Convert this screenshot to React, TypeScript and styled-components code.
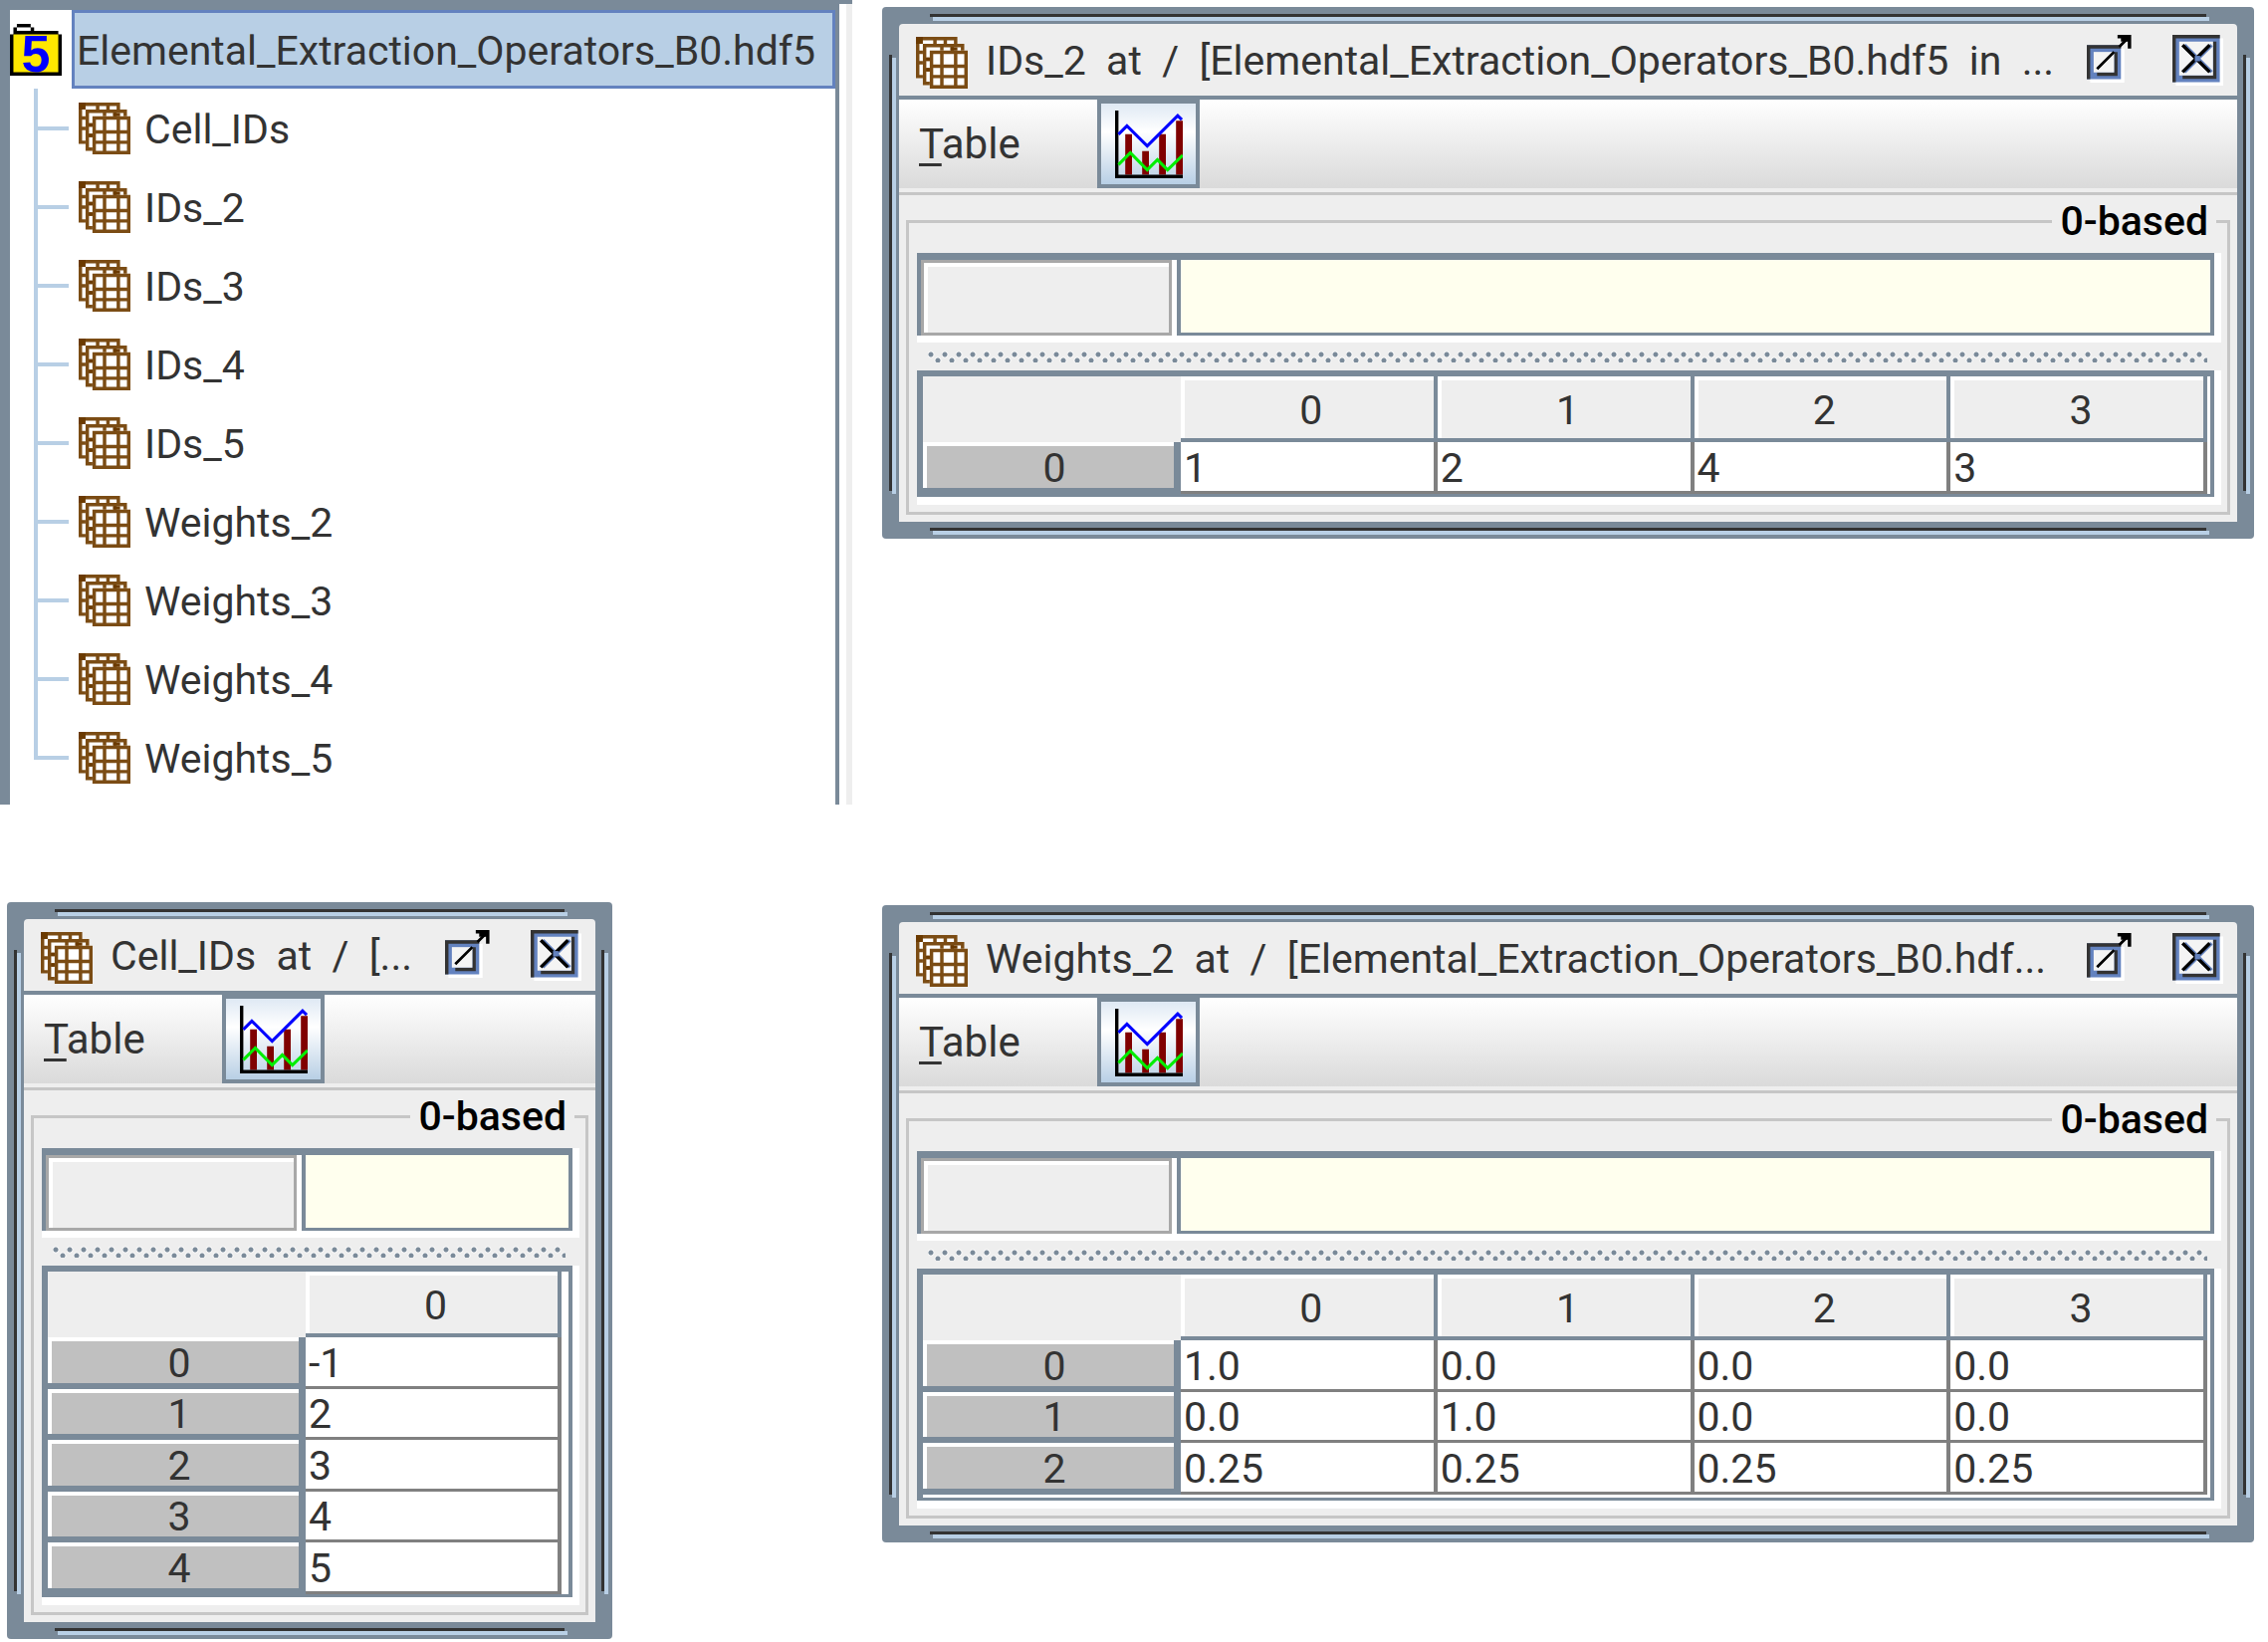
import React from 'react';
import styled, { createGlobalStyle, css } from 'styled-components';

const c = {
  frame: '#7a8a99',
  dark: '#333333',
  light: '#b8cfe5',
  blue: '#6382bf',
  panel: '#eeeeee',
  etch: '#c6c6c6',
  grid: '#808080',
  brown: '#7b4c14',
};

const GlobalStyle = createGlobalStyle`
  *, *::before, *::after { box-sizing: border-box; }
  body { margin: 0; background: #fff; }
  body, button, input {
    font-family: Roboto, "Liberation Sans", sans-serif;
    font-size: 41px;
    line-height: 50px;
    color: ${c.dark};
  }
`;

const Desktop = styled.main`
  display: grid;
  grid-template-columns: 856px minmax(0, 1fr);
  column-gap: 30px;
  row-gap: 98px;
  align-items: start;
  padding-right: 14px;
`;

const Cell = styled.div<{ $top?: number; $left?: number }>`
  padding-top: ${p => p.$top ?? 0}px;
  padding-left: ${p => p.$left ?? 0}px;
`;

/* ---------- tree ---------- */

const TreePanel = styled.nav`
  display: flex;
`;

const TreeArea = styled.div`
  flex: 1;
  min-width: 0;
  border: solid ${c.frame};
  border-width: 10px 4px 0 10px;
  padding-bottom: 8px;
`;

const Gutter = styled.div`
  width: 13px;
  border-top: 4px solid ${c.frame};
  background: linear-gradient(90deg, #fff 7px, ${c.panel} 7px);
`;

const RootRow = styled.div`
  display: flex;
  align-items: center;
  gap: 10px;
  height: 79px;
`;

const RootLabel = styled.span`
  flex: 1;
  height: 100%;
  display: flex;
  align-items: center;
  padding: 2px 0 0 2px;
  border: 3px solid ${c.blue};
  background: ${c.light};
  white-space: nowrap;
`;

const Branches = styled.ul`
  list-style: none;
  margin: 0;
  padding: 0;
`;

const line = (color: string) => `linear-gradient(${color}, ${color})`;

const Branch = styled.li`
  display: flex;
  align-items: center;
  gap: 14px;
  height: 79px;
  padding-left: 69px;
  background:
    ${line(c.light)} 24px 0 / 4px 100% no-repeat,
    ${line(c.light)} 24px 38px / 35px 4px no-repeat;

  &:last-child {
    background-size: 4px 42px, 35px 4px;
  }
`;

const BranchLabel = styled.span`
  padding-top: 2px;
`;

/* ---------- internal frame ---------- */

const Frame = styled.section<{ $width?: string }>`
  width: ${p => p.$width ?? '100%'};
  padding: 17px;
  border-radius: 4px;
  background:
    ${line(c.dark)} 48px 7px / calc(100% - 96px) 3px no-repeat,
    ${line(c.light)} 51px 10px / calc(100% - 96px) 4px no-repeat,
    ${line(c.dark)} 48px calc(100% - 8px) / calc(100% - 96px) 3px no-repeat,
    ${line(c.light)} 51px calc(100% - 4px) / calc(100% - 96px) 4px no-repeat,
    ${line(c.dark)} 7px 48px / 3px calc(100% - 96px) no-repeat,
    ${line(c.light)} 10px 51px / 4px calc(100% - 96px) no-repeat,
    ${line(c.dark)} calc(100% - 8px) 48px / 3px calc(100% - 96px) no-repeat,
    ${line(c.light)} calc(100% - 4px) 51px / 4px calc(100% - 96px) no-repeat,
    ${c.frame};
`;

const FrameBody = styled.div`
  background: ${c.panel};
  border-radius: 4px 4px 0 0;
  padding-bottom: 7px;
`;

const TitleBar = styled.header`
  display: flex;
  align-items: center;
  height: 76px;
  padding: 0 14px 0 17px;
  border-bottom: 4px solid ${c.frame};
`;

const TitleText = styled.h2`
  flex: 1;
  min-width: 0;
  margin: 0 0 0 18px;
  padding-top: 2px;
  font: inherit;
  white-space: pre;
`;

const TitleIcon = styled.span`
  display: flex;
  padding-top: 6px;
`;

const TitleButtons = styled.div`
  display: flex;
  gap: 38px;
`;

const TitleButton = styled.button`
  display: flex;
  padding: 0;
  border: 0;
  background: none;
`;

const MenuBar = styled.div`
  display: flex;
  align-items: center;
  height: 96px;
  padding: 0 0 7px 20px;
  background:
    ${line(c.etch)} 0 93px / 100% 3px no-repeat,
    ${line(c.panel)} 0 89px / 100% 7px no-repeat,
    linear-gradient(#fff, #dadada 89px);
`;

const Menu = styled.button`
  width: 179px;
  padding: 0;
  border: 0;
  background: none;
  font-size: 42px;
  text-align: left;

  u {
    text-decoration-thickness: 3px;
    text-underline-offset: 5px;
    text-decoration-skip-ink: none;
  }
`;

const ToolToggle = styled.button`
  display: flex;
  align-items: center;
  justify-content: center;
  width: 103px;
  height: 89px;
  padding: 0;
  border: 4px solid ${c.frame};
  background: linear-gradient(#dfe9f4, #fff 35%, ${c.light});
`;

const Group = styled.fieldset`
  margin: 5px 7px 0;
  padding: 11px 6px 7px 8px;
  min-width: 0;
  border: 3px solid ${c.etch};
`;

const GroupTitle = styled.legend`
  margin: 0 5px 0 auto;
  padding: 0 8px;
  color: #000;
  font-weight: 500;
  line-height: 42px;
`;

const well = css`
  background: #fff;
  padding: 0 7px 7px 0;
`;

const FormulaWell = styled.div`
  ${well}
`;

const FormulaBar = styled.div`
  display: flex;
  gap: 5px;
  height: 83px;
  border-top: 7px solid ${c.frame};
  border-left: 4px solid ${c.frame};
`;

const CellName = styled.input`
  flex: none;
  width: 252px;
  padding: 0 4px;
  border: 3px solid #a8a8a8;
  border-radius: 0;
  outline: 0;
  background: ${c.panel};
  box-shadow: inset 4px 4px #fff;
`;

const CellValue = styled.input`
  flex: 1;
  min-width: 0;
  padding: 0 4px;
  border: solid ${c.frame};
  border-width: 0 4px 3px;
  border-radius: 0;
  outline: 0;
  background: #ffffee;
`;

const Divider = styled.div`
  height: 28px;
  padding: 8px 14px 8px 11px;

  &::before {
    content: '';
    display: block;
    height: 12px;
    background:
      radial-gradient(circle at 3px 4px, ${c.frame} 2px, #fafafa 3px, transparent 4px) 0 0 / 14px 12px,
      radial-gradient(circle at 10px 10px, ${c.frame} 2px, #fafafa 3px, transparent 4px) 0 0 / 14px 12px;
  }
`;

const TableWell = styled.div`
  ${well}
  padding-bottom: 8px;
`;

const TablePane = styled.div<{ $slackX: number; $slackY: number }>`
  border: solid ${c.frame};
  border-width: 6px 4px 3px 6px;
  padding: 0 ${p => p.$slackX}px ${p => p.$slackY}px 0;
`;

const Grid = styled.table`
  width: 100%;
  table-layout: fixed;
  border-collapse: separate;
  border-spacing: 0;

  th, td {
    padding: 0;
    font-weight: 400;
  }
`;

const Corner = styled.td`
  width: 259px;
  height: 66px;
  background: ${c.panel};
`;

const ColumnHead = styled.th`
  && { padding: 5px 0 0 8px; }
  border: solid ${c.frame};
  border-width: 0 4px 4px 0;
  background: ${c.panel};
  box-shadow: inset 4px 4px #fff;
`;

const Row = styled.tr`
  height: 52px;
  &:nth-child(even) { height: 51px; }
`;

const RowHead = styled.th`
  && { padding: 5px 0 0 12px; }
  border: solid ${c.frame};
  border-width: 0 7px 6px 0;
  background: #c0c0c0;
  box-shadow: inset 4px 4px #fff;
  line-height: 40px;
`;

const Data = styled.td`
  && { padding: 2px 0 0 3px; }
  border: solid ${c.grid};
  border-width: 0 4px 3px 0;
  background: #fff;
  line-height: 40px;
`;

/* ---------- drawings ---------- */

const DatasetIcon = () => (
  <svg width="52" height="52" viewBox="0 0 15 15" aria-hidden="true">
    <path fill="#fff" d="M0 0h12v2h2v2h1v11H4v-1H2v-2H0z" />
    <g fill="none" stroke={c.brown}>
      <path d="M.5 12V.5h11V2M0 11.5h2M0 4.5h2M0 7.5h2M5.5 0v2M8.5 0v2" />
      <path d="M2.5 14V2.5h11V4M2 13.5h2M2 6.5h2M2 9.5h2M7.5 2v2M10.5 2v2" />
      <path d="M4.5 4.5h10v10h-10zM7.5 4v11M11.5 4v11M4 8.5h11M4 11.5h11" />
    </g>
    <path fill="#6b3a00" d="M0 0h2v2H0zM3 6h1v1H3zM3 9h1v1H3zM10 3h2v1h-2z" />
  </svg>
);

const FolderSvg = styled.svg`
  overflow: visible;
`;

const Hdf5Icon = () => (
  <FolderSvg width="52" height="52" viewBox="0 0 15 15" aria-hidden="true">
    <path fill="#000" d="M2 0h4v1h1v1h7v1h1v12H0V3h1V1h1z" />
    <path fill="#fff" d="M2 1h4v1H2z" />
    <path fill="#ffe800" d="M1 3h13v11H1z" />
    <text x="7.5" y="13.8" textAnchor="middle" fontFamily="Liberation Sans, sans-serif" fontWeight="700" fontSize="15" fill="#0000ff">5</text>
  </FolderSvg>
);

const ChartIcon = () => (
  <svg width="68" height="68" viewBox="0 0 20 20" aria-hidden="true">
    <path fill="#800000" d="M3 7h2v12H3zM8 12h2v7H8zM13 7h2v12h-2zM18 3h2v16h-2z" />
    <path fill="#000" d="M0 0h1v19h19v1H0z" />
    <polyline fill="none" stroke="#0000ff" strokeWidth="0.9" points="1,7 3.5,4.5 9.5,10.5 18.5,1.5 19.7,2.7" />
    <polyline fill="none" stroke="#00ee00" strokeWidth="0.9" points="1,16 4.5,12.5 9.5,17.5 12.5,14.5 15.5,17.5 20,13.2" />
  </svg>
);

const DetachIcon = () => (
  <svg width="48" height="48" viewBox="0 0 14 14" aria-hidden="true">
    <path fill="#fff" d="M1 4h10v10H1z" />
    <path fill={c.blue} d="M0 3h10v10H0z" />
    <path fill={c.dark} d="M0 3h10v1H1v9H0zM8 5h1v7H3v-1h5z" />
    <path fill="#f4f4f4" d="M2 5h6v6H2z" />
    <path fill="none" stroke="#000" strokeWidth="0.8" d="M3 10 8 5M9.5 3.5 12 1" />
    <path fill="#000" d="M9 0h4v4h-1V2h-2V1H9z" />
  </svg>
);

const CloseIcon = () => (
  <svg width="51" height="51" viewBox="0 0 15 15" aria-hidden="true">
    <path fill="#fff" d="M1 1h14v14H1z" />
    <path fill={c.blue} d="M0 0h14v14H0z" />
    <path fill={c.dark} d="M0 0h14v1H1v13H0zM12 2h1v11H3v-1h9z" />
    <path fill="#f4f4f4" d="M2 2h10v10H2z" />
    <path fill="none" stroke={c.blue} d="m3.6 3 8 8M11.6 3l-8 8" />
    <path fill="none" stroke="#000" d="m3 3 8 8M11 3l-8 8" />
    <path fill={c.blue} d="M6.6 6.2h1.6v1.6H6.6z" />
  </svg>
);

/* ---------- data ---------- */

const datasets = [
  'Cell_IDs', 'IDs_2', 'IDs_3', 'IDs_4', 'IDs_5',
  'Weights_2', 'Weights_3', 'Weights_4', 'Weights_5',
];

interface DataWindowProps {
  title: string;
  rows: string[][];
  width?: string;
  slackX?: number;
  slackY?: number;
}

const DataWindow = ({ title, rows, width, slackX = 3, slackY = 0 }: DataWindowProps) => (
  <Frame $width={width}>
    <FrameBody>
      <TitleBar>
        <TitleIcon><DatasetIcon /></TitleIcon>
        <TitleText>{title}</TitleText>
        <TitleButtons>
          <TitleButton aria-label="Detach"><DetachIcon /></TitleButton>
          <TitleButton aria-label="Close"><CloseIcon /></TitleButton>
        </TitleButtons>
      </TitleBar>
      <MenuBar>
        <Menu><u>T</u>able</Menu>
        <ToolToggle aria-label="Chart"><ChartIcon /></ToolToggle>
      </MenuBar>
      <Group>
        <GroupTitle>0-based</GroupTitle>
        <FormulaWell>
          <FormulaBar>
            <CellName aria-label="Cell" readOnly />
            <CellValue aria-label="Value" readOnly />
          </FormulaBar>
        </FormulaWell>
        <Divider />
        <TableWell>
          <TablePane $slackX={slackX} $slackY={slackY}>
            <Grid>
              <thead>
                <tr>
                  <Corner />
                  {rows[0].map((_, i) => <ColumnHead key={i} scope="col">{i}</ColumnHead>)}
                </tr>
              </thead>
              <tbody>
                {rows.map((row, r) => (
                  <Row key={r}>
                    <RowHead scope="row">{r}</RowHead>
                    {row.map((value, i) => <Data key={i}>{value}</Data>)}
                  </Row>
                ))}
              </tbody>
            </Grid>
          </TablePane>
        </TableWell>
      </Group>
    </FrameBody>
  </Frame>
);

export default function App() {
  return (
    <>
      <GlobalStyle />
      <Desktop>
        <TreePanel>
          <TreeArea>
            <RootRow>
              <Hdf5Icon />
              <RootLabel>Elemental_Extraction_Operators_B0.hdf5</RootLabel>
            </RootRow>
            <Branches>
              {datasets.map(name => (
                <Branch key={name}>
                  <DatasetIcon />
                  <BranchLabel>{name}</BranchLabel>
                </Branch>
              ))}
            </Branches>
          </TreeArea>
          <Gutter />
        </TreePanel>
        <Cell $top={7}>
          <DataWindow
            title="IDs_2  at  /  [Elemental_Extraction_Operators_B0.hdf5  in  ..."
            rows={[['1', '2', '4', '3']]}
          />
        </Cell>
        <Cell $left={7}>
          <DataWindow
            title="Cell_IDs  at  /  [..."
            rows={[['-1'], ['2'], ['3'], ['4'], ['5']]}
            width="608px"
            slackX={7}
          />
        </Cell>
        <Cell $top={3}>
          <DataWindow
            title="Weights_2  at  /  [Elemental_Extraction_Operators_B0.hdf..."
            rows={[
              ['1.0', '0.0', '0.0', '0.0'],
              ['0.0', '1.0', '0.0', '0.0'],
              ['0.25', '0.25', '0.25', '0.25'],
            ]}
            slackY={3}
          />
        </Cell>
      </Desktop>
    </>
  );
}
